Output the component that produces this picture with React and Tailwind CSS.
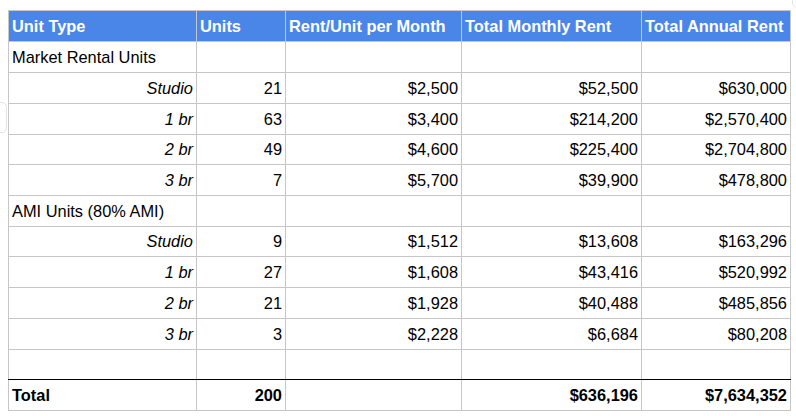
const header = ['Unit Type', 'Units', 'Rent/Unit per Month', 'Total Monthly Rent', 'Total Annual Rent'];

const rows = [
  { section: 'Market Rental Units' },
  { type: 'Studio', units: '21', rent: '$2,500', monthly: '$52,500', annual: '$630,000' },
  { type: '1 br', units: '63', rent: '$3,400', monthly: '$214,200', annual: '$2,570,400' },
  { type: '2 br', units: '49', rent: '$4,600', monthly: '$225,400', annual: '$2,704,800' },
  { type: '3 br', units: '7', rent: '$5,700', monthly: '$39,900', annual: '$478,800' },
  { section: 'AMI Units (80% AMI)' },
  { type: 'Studio', units: '9', rent: '$1,512', monthly: '$13,608', annual: '$163,296' },
  { type: '1 br', units: '27', rent: '$1,608', monthly: '$43,416', annual: '$520,992' },
  { type: '2 br', units: '21', rent: '$1,928', monthly: '$40,488', annual: '$485,856' },
  { type: '3 br', units: '3', rent: '$2,228', monthly: '$6,684', annual: '$80,208' },
  { empty: true },
];

const cell = 'bg-white flex items-center px-[3px] text-black whitespace-nowrap';
// black rule above the total row, drawn over the grey grid line
const rule = "relative before:content-[''] before:absolute before:-top-px before:-left-px before:-right-px before:h-px before:bg-black";

const RentTable = () => {
  return (
    <div
      className="grid grid-cols-[187px_88px_175px_179px_148px] grid-rows-[30px_30px_30px_30px_29px_30px_30px_29px_30px_30px_30px_29px_30px] gap-px p-px bg-[#c6c6c6] w-[783px]"
      style={{ fontFamily: '"Liberation Sans", Arial, sans-serif' }}
    >
      {/* Header */}
      {header.map((h) => (
        <div key={h} className="bg-[#4a86e8] flex items-center px-[3px] text-white font-bold text-[16.4px] whitespace-nowrap">
          {h}
        </div>
      ))}

      {/* Body */}
      {rows.map((r, i) => {
        if (r.section) {
          return [
            <div key={`${i}-a`} className={`${cell} text-[16.4px]`}>{r.section}</div>,
            <div key={`${i}-b`} className={cell} />,
            <div key={`${i}-c`} className={cell} />,
            <div key={`${i}-d`} className={cell} />,
            <div key={`${i}-e`} className={cell} />,
          ];
        }
        if (r.empty) {
          return [0, 1, 2, 3, 4].map((k) => <div key={`${i}-${k}`} className={cell} />);
        }
        return [
          <div key={`${i}-a`} className={`${cell} justify-end italic text-[16.4px]`}>{r.type}</div>,
          <div key={`${i}-b`} className={`${cell} justify-end text-[16.4px]`}>{r.units}</div>,
          <div key={`${i}-c`} className={`${cell} justify-end text-[16.4px]`}>{r.rent}</div>,
          <div key={`${i}-d`} className={`${cell} justify-end text-[16.4px]`}>{r.monthly}</div>,
          <div key={`${i}-e`} className={`${cell} justify-end text-[16.4px]`}>{r.annual}</div>,
        ];
      })}

      {/* Total */}
      <div className={`${cell} ${rule} font-bold text-[16.4px]`}>Total</div>
      <div className={`${cell} ${rule} justify-end font-bold text-[16.4px]`}>200</div>
      <div className={`${cell} ${rule}`} />
      <div className={`${cell} ${rule} justify-end font-bold text-[16.4px]`}>$636,196</div>
      <div className={`${cell} ${rule} justify-end font-bold text-[16.4px]`}>$7,634,352</div>
    </div>
  );
};

export default function App() {
  return (
    <div className="relative w-[796px] h-[416px] bg-white overflow-hidden">
      <div className="pt-[10px] pl-[8px]">
        <RentTable />
      </div>
      {/* faint UI overlays from the sheet */}
      <div className="absolute left-[-6px] top-[102px] w-[13px] h-[31px] rounded-[5px] border border-[#e3e3e3]" />
      <div className="absolute left-[792px] top-[-8px] w-[20px] h-[16px] rounded-[5px] border border-[#e3e3e3]" />
    </div>
  );
}
